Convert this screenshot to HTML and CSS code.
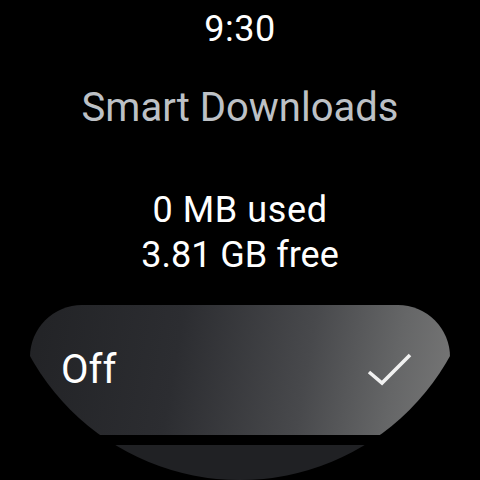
FILE: index.html
```html
<!DOCTYPE html>
<html>
<head>
<meta charset="utf-8">
<link rel="stylesheet" href="styles.css">
</head>
<body>
<div class="watch">
  <div class="time">9:30</div>
  <div class="title">Smart Downloads</div>
  <div class="usage">
    <div class="line">0 MB used</div>
    <div class="line">3.81 GB free</div>
  </div>
  <div class="chip chip-selected">
    <span class="chip-label">Off</span>
    <svg class="check" width="46" height="34" viewBox="0 0 46 34">
      <polyline points="3,19 16,30 44,2" fill="none" stroke="#f1f1f1" stroke-width="3.6"/>
    </svg>
  </div>
  <div class="chip chip-next"></div>
</div>
</body>
</html>
```
FILE: styles.css
```css
html, body {
  margin: 0;
  padding: 0;
  background: #000;
}
.watch {
  width: 480px;
  height: 480px;
  border-radius: 50%;
  overflow: hidden;
  background: #000;
  display: flex;
  flex-direction: column;
  font-family: Roboto, "Noto Sans", sans-serif;
  color: #fff;
}
.time {
  margin-top: 7px;
  font-size: 36px;
  line-height: 44px;
  text-align: center;
  letter-spacing: 0.5px;
  color: #fff;
}
.title {
  margin-top: 33px;
  font-size: 40px;
  line-height: 48px;
  text-align: center;
  color: #bdc1c6;
}
.usage {
  margin-top: 56px;
  display: flex;
  flex-direction: column;
  align-items: center;
}
.line {
  font-size: 36px;
  line-height: 45px;
}
.line:first-child {
  letter-spacing: 0.6px;
}
.chip {
  flex: none;
  margin: 0 30px;
  border-radius: 52px;
}
.chip-selected {
  margin-top: 27px;
  height: 130px;
  display: flex;
  align-items: center;
  justify-content: space-between;
  padding: 0 38px 0 31px;
  background: linear-gradient(100deg, #222326 0%, #2c2d31 35%, #48494c 65%, #656667 85%, #777 100%);
}
.chip-label {
  font-size: 40px;
  line-height: 44px;
  color: #fff;
}
.check {
  display: block;
}
.chip-next {
  margin-top: 10px;
  height: 130px;
  background: #202124;
}
```
